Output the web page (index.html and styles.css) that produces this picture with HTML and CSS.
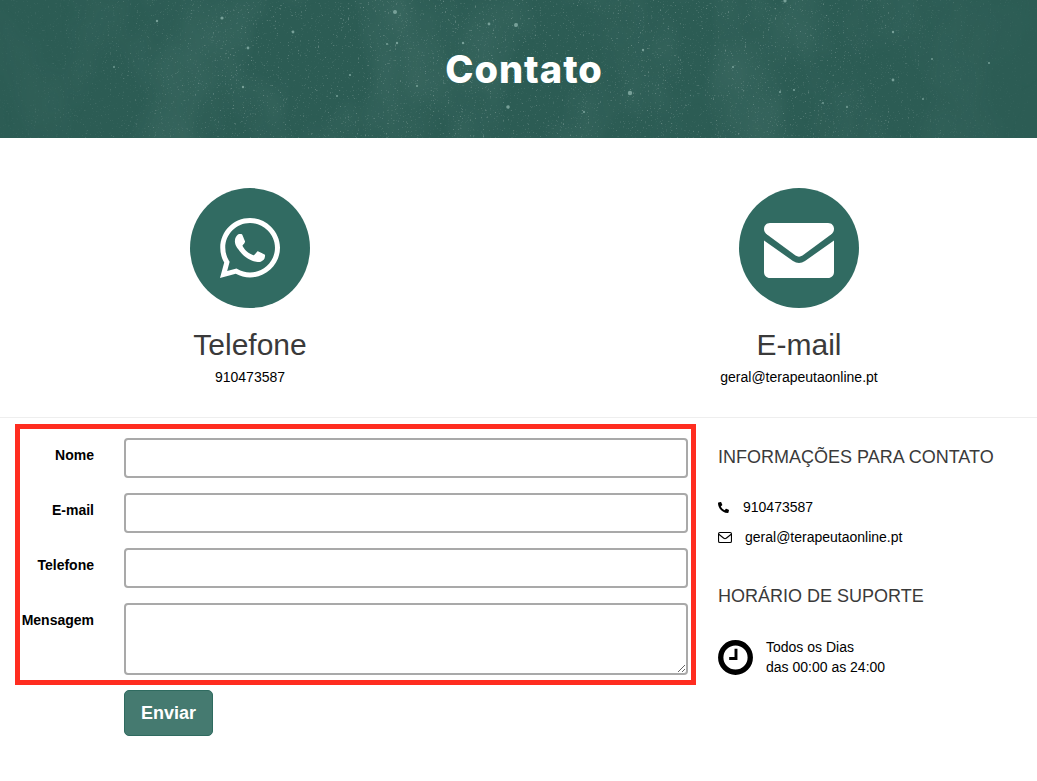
FILE: index.html
```html
<!DOCTYPE html>
<html lang="pt">
<head>
    <meta charset="UTF-8">
    <meta name="viewport" content="width=device-width, initial-scale=1.0">
    <title>Contato</title>
    <link rel="stylesheet" href="styles.css">
</head>
<body>
    <header class="hero">
        <svg class="hero-sky" width="1037" height="138" aria-hidden="true">
            <defs>
                <filter id="specks" x="0" y="0" width="100%" height="100%">
                    <feTurbulence type="fractalNoise" baseFrequency="0.6" numOctaves="2" seed="7"/>
                    <feColorMatrix type="matrix" values="0 0 0 0 1  0 0 0 0 1  0 0 0 0 1  3 3 0 0 -3.6"/>
                </filter>
                <filter id="haze" x="0" y="0" width="100%" height="100%">
                    <feTurbulence type="fractalNoise" baseFrequency="0.014 0.009" numOctaves="3" seed="12"/>
                    <feColorMatrix type="matrix" values="0 0 0 0 0.55  0 0 0 0 0.75  0 0 0 0 0.7  1.4 0 0 0 -0.55"/>
                </filter>
                <linearGradient id="fade" x1="0" x2="1" y1="0" y2="0">
                    <stop offset="0" stop-color="#fff" stop-opacity="0.2"/>
                    <stop offset="0.22" stop-color="#fff"/>
                    <stop offset="0.8" stop-color="#fff"/>
                    <stop offset="1" stop-color="#fff" stop-opacity="0.1"/>
                </linearGradient>
                <mask id="fade-mask"><rect width="1037" height="138" fill="url(#fade)"/></mask>
            </defs>
            <g mask="url(#fade-mask)">
                <rect width="1037" height="138" filter="url(#haze)" opacity="0.13"/>
                <rect width="1037" height="138" filter="url(#specks)" opacity="0.24"/>
            </g>
            <g class="stars">
                <circle cx="222" cy="18" r="1.6"/><circle cx="395" cy="12" r="2"/><circle cx="516" cy="25" r="2"/>
                <circle cx="489" cy="24" r="1.4"/><circle cx="157" cy="21" r="1.2"/><circle cx="293" cy="32" r="1.4"/>
                <circle cx="248" cy="48" r="1.4"/><circle cx="397" cy="43" r="1.2"/><circle cx="387" cy="44" r="1"/>
                <circle cx="463" cy="43" r="1.2"/><circle cx="630" cy="93" r="2.2"/><circle cx="508" cy="107" r="1.8"/>
                <circle cx="893" cy="32" r="1.2"/><circle cx="893" cy="80" r="1.4"/><circle cx="780" cy="92" r="1.1"/>
                <circle cx="794" cy="90" r="1.1"/><circle cx="243" cy="87" r="1.2"/><circle cx="350" cy="75" r="1.1"/>
                <circle cx="417" cy="86" r="1"/><circle cx="733" cy="67" r="1"/><circle cx="643" cy="50" r="1.2"/>
                <circle cx="785" cy="1" r="1.6"/><circle cx="584" cy="112" r="1.1"/><circle cx="337" cy="96" r="1"/>
                <circle cx="989" cy="63" r="1"/><circle cx="932" cy="59" r="0.9"/><circle cx="847" cy="107" r="1"/>
                <circle cx="823" cy="103" r="0.9"/><circle cx="923" cy="99" r="0.9"/><circle cx="114" cy="67" r="0.9"/>
            </g>
        </svg>
        <h1 class="hero-title">Contato</h1>
    </header>

    <section class="channels">
        <div class="channel">
            <div class="channel-icon">
                <svg width="60" height="60" viewBox="0 32 448 448" fill="#fff">
                    <path d="M380.9 97.1C339 55.1 283.2 32 223.9 32c-122.4 0-222 99.6-222 222 0 39.1 10.2 77.3 29.6 111L0 480l117.7-30.9c32.4 17.7 68.9 27 106.1 27h.1c122.3 0 224.1-99.6 224.1-222 0-59.3-25.2-115-67.1-157zm-157 341.6c-33.2 0-65.7-8.9-94-25.7l-6.7-4-69.8 18.3L72 359.2l-4.4-7c-18.5-29.4-28.2-63.3-28.2-98.2 0-101.7 82.8-184.5 184.6-184.5 49.3 0 95.6 19.2 130.4 54.1 34.8 34.9 56.2 81.2 56.1 130.5 0 101.8-84.9 184.6-186.6 184.6zm101.2-138.2c-5.5-2.8-32.8-16.2-37.9-18-5.1-1.9-8.8-2.8-12.5 2.8-3.7 5.6-14.3 18-17.6 21.8-3.2 3.7-6.5 4.2-12 1.4-32.6-16.3-54-29.1-75.5-66-5.7-9.8 5.7-9.1 16.3-30.3 1.8-3.7.9-6.9-.5-9.7-1.4-2.8-12.5-30.1-17.1-41.2-4.5-10.8-9.1-9.3-12.5-9.5-3.2-.2-6.9-.2-10.6-.2-3.7 0-9.7 1.4-14.8 6.9-5.1 5.6-19.4 19-19.4 46.3 0 27.3 19.9 53.7 22.6 57.4 2.8 3.7 39.1 59.7 94.8 83.8 35.2 15.2 49 16.5 66.6 13.9 10.7-1.6 32.8-13.4 37.4-26.4 4.6-13 4.6-24.1 3.2-26.4-1.3-2.5-5-3.9-10.5-6.6z"/>
                </svg>
            </div>
            <h2 class="channel-title">Telefone</h2>
            <p class="channel-text">910473587</p>
        </div>
        <div class="channel">
            <div class="channel-icon">
                <svg class="mail-glyph" width="70" height="55" viewBox="0 0 70 55" fill="#fff">
                    <path d="M6 0H64C68 0 70 3 70 6C70 8 69 10 67 11.500L38.500 32.500C36.300 34 33.700 34 31.500 32.500L3 11.500C1 10 0 8 0 6C0 3 2 0 6 0Z"/>
                    <path d="M0 17.500L29 38C33 40.600 37 40.600 41 38L70 17.500V49C70 52.500 67.500 55 64 55H6C2.500 55 0 52.500 0 49Z"/>
                </svg>
            </div>
            <h2 class="channel-title">E-mail</h2>
            <p class="channel-text">geral@terapeutaonline.pt</p>
        </div>
    </section>

    <main class="contact">
        <form class="contact-form">
            <div class="fields">
                <label class="field-label" for="nome">Nome</label>
                <input class="field-input" id="nome" type="text">
                <label class="field-label" for="email">E-mail</label>
                <input class="field-input" id="email" type="text">
                <label class="field-label" for="telefone">Telefone</label>
                <input class="field-input" id="telefone" type="text">
                <label class="field-label" for="mensagem">Mensagem</label>
                <textarea class="field-input field-area" id="mensagem"></textarea>
            </div>
            <button class="send" type="button">Enviar</button>
        </form>

        <aside class="info">
            <h3 class="info-title">INFORMAÇÕES PARA CONTATO</h3>
            <p class="info-row info-phone">
                <svg width="11" height="11" viewBox="0 0 512 512" fill="#000">
                    <path transform="translate(512 0) scale(-1 1)" d="M493.400 24.600l-104-24c-11.300-2.600-22.900 3.300-27.500 13.900l-48 112c-4.200 9.800-1.400 21.300 6.900 28l60.600 49.600c-36 76.700-98.900 140.500-177.200 177.200l-49.600-60.600c-6.800-8.300-18.200-11.100-28-6.900l-112 48C3.900 366.500-2 378.100.6 389.400l24 104C27.100 504.200 36.700 512 48 512c256.100 0 464-207.500 464-464 0-11.200-7.700-20.900-18.600-23.400z"/>
                </svg>
                <span>910473587</span>
            </p>
            <p class="info-row info-mail">
                <svg width="14" height="11" viewBox="0 0 14 11" fill="none" stroke="#000" stroke-width="1.100">
                    <rect x="0.550" y="0.550" width="12.900" height="9.900" rx="1.300"/>
                    <path d="M0.800 2.300L5.800 6.200C6.500 6.800 7.500 6.800 8.200 6.200L13.200 2.300"/>
                </svg>
                <span>geral@terapeutaonline.pt</span>
            </p>
            <h3 class="info-title info-title-hours">HORÁRIO DE SUPORTE</h3>
            <div class="hours">
                <svg width="35" height="35" viewBox="0 0 36 36" fill="none" stroke="#000">
                    <circle cx="18" cy="18" r="15.200" stroke-width="5.500"/>
                    <path d="M18.500 9V19H11.500" stroke-width="3"/>
                </svg>
                <p class="hours-text">Todos os Dias<br>das 00:00 as 24:00</p>
            </div>
        </aside>
    </main>
</body>
</html>
```

FILE: styles.css
```css
* {
    box-sizing: border-box;
}
body {
    margin: 0;
    font-family: "Liberation Sans", Arial, sans-serif;
    font-size: 14px;
    color: #000;
    background: #fff;
}
.hero {
    position: relative;
    height: 138px;
    padding-left: 11px;
    background: #2c5c54;
    display: flex;
    align-items: center;
    justify-content: center;
    overflow: hidden;
}
.hero-sky {
    position: absolute;
    top: 0;
    left: 0;
}
.stars circle {
    fill: #8fb5ad;
    opacity: 0.75;
}
.hero-title {
    position: relative;
    margin: 0;
    font-family: Inter, "Liberation Sans", sans-serif;
    font-size: 38px;
    font-weight: 800;
    line-height: 1;
    letter-spacing: 1px;
    color: #fff;
}
.channels {
    display: grid;
    grid-template-columns: 500px 1fr;
    column-gap: 61px;
    height: 280px;
    padding-top: 50px;
    border-bottom: 1px solid #eee;
}
.channel {
    display: flex;
    flex-direction: column;
    align-items: center;
}
.channel-icon {
    width: 120px;
    height: 120px;
    border-radius: 50%;
    background: #316b62;
    display: flex;
    align-items: center;
    justify-content: center;
}
.mail-glyph {
    margin-top: 5px;
}
.channel-title {
    margin: 20px 0 0;
    font-size: 30px;
    font-weight: 400;
    line-height: 34px;
    color: #3a3a3a;
}
.channel-text {
    margin: 5px 0 0;
    line-height: 20px;
}
.contact {
    display: flex;
    padding: 6px 0 0 15px;
}
.contact-form {
    width: 681px;
}
.fields {
    display: grid;
    grid-template-columns: 74px 564px;
    column-gap: 30px;
    row-gap: 15px;
    padding: 9px 3px 5px 0;
    border: 5px solid #ff2d20;
}
.field-label {
    padding-top: 7px;
    font-weight: 700;
    line-height: 20px;
    text-align: right;
    white-space: nowrap;
}
.field-input {
    display: block;
    width: 100%;
    height: 40px;
    margin: 0;
    border: 2px solid #a9a9a9;
    border-radius: 4px;
    background: #fff;
}
.field-area {
    height: 72px;
}
.send {
    display: block;
    width: 89px;
    height: 46px;
    margin: 5px 0 0 109px;
    padding: 0;
    border: 1px solid #2f6b60;
    border-radius: 5px;
    background: #457a70;
    color: #fff;
    font-family: inherit;
    font-size: 18px;
    font-weight: 700;
}
.info {
    margin-left: 22px;
    padding-top: 17px;
}
.info-title {
    margin: 0;
    font-size: 18px;
    font-weight: 400;
    line-height: 32px;
    color: #3a3a3a;
}
.info-title-hours {
    margin-top: 33px;
}
.info-row {
    display: flex;
    align-items: center;
    margin: 0;
    line-height: 20px;
}
.info-phone {
    margin-top: 24px;
    column-gap: 14px;
}
.info-mail {
    margin-top: 10px;
    column-gap: 13px;
}
.hours {
    display: flex;
    align-items: center;
    column-gap: 13px;
    margin-top: 25px;
}
.hours-text {
    margin: 0;
    line-height: 20px;
}
```
